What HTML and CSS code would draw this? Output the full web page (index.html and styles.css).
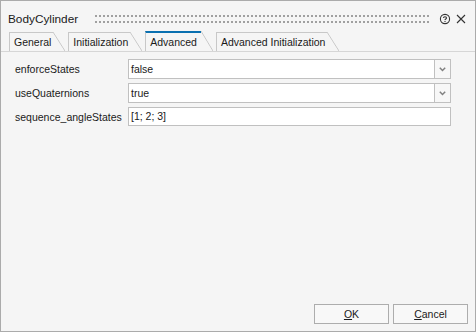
FILE: index.html
```html
<!DOCTYPE html>
<html lang="en">
<head>
    <meta charset="UTF-8">
    <title>BodyCylinder</title>
    <link rel="stylesheet" href="styles.css">
</head>
<body>
    <div class="window">
        <div class="titlebar">
            <span class="title">BodyCylinder</span>
            <div class="grip"></div>
            <svg class="help" width="12" height="12" viewBox="0 0 12 12">
                <circle cx="6" cy="6" r="4.6" fill="none" stroke="#333" stroke-width="1.1"/>
                <path d="M4.5 4.9 C4.5 3.3 7.5 3.3 7.5 4.9 C7.5 6 6 6 6 7.1" fill="none" stroke="#333" stroke-width="1.1"/>
                <rect x="5.45" y="7.9" width="1.1" height="1.1" fill="#333"/>
            </svg>
            <svg class="close" width="10" height="10" viewBox="0 0 10 10">
                <path d="M1 1 L9 9 M9 1 L1 9" stroke="#333" stroke-width="1.1"/>
            </svg>
        </div>

        <div class="tabs">
            <div class="tab">General</div>
            <div class="tab">Initialization</div>
            <div class="tab active">Advanced</div>
            <div class="tab">Advanced Initialization</div>
        </div>

        <div class="panel">
            <div class="label">enforceStates</div>
            <div class="combo">
                <div class="value">false</div>
                <div class="drop">
                    <svg width="7" height="5" viewBox="0 0 7 5"><path d="M0.8 0.8 L3.5 3.5 L6.2 0.8" fill="none" stroke="#808080" stroke-width="1.5"/></svg>
                </div>
            </div>

            <div class="label">useQuaternions</div>
            <div class="combo">
                <div class="value">true</div>
                <div class="drop">
                    <svg width="7" height="5" viewBox="0 0 7 5"><path d="M0.8 0.8 L3.5 3.5 L6.2 0.8" fill="none" stroke="#808080" stroke-width="1.5"/></svg>
                </div>
            </div>

            <div class="label">sequence_angleStates</div>
            <div class="field">[1; 2; 3]</div>
        </div>

        <div class="footer">
            <button class="button"><u>O</u>K</button>
            <button class="button"><u>C</u>ancel</button>
        </div>
    </div>
</body>
</html>
```

FILE: styles.css
```css
body {
    margin: 0;
    padding: 0;
    font-family: 'Liberation Sans', Arial, sans-serif;
    color: #1a1a1a;
}

.window {
    width: 476px;
    height: 332px;
    box-sizing: border-box;
    border: 1px solid #ababab;
    background: #f5f5f5;
    display: flex;
    flex-direction: column;
}

.titlebar {
    display: flex;
    align-items: center;
    height: 30px;
    box-sizing: border-box;
    padding: 6px 9px 0 7px;
}

.title {
    font-size: 11.8px;
    color: #1a1a1a;
}

.grip {
    flex: 1;
    height: 12px;
    margin: 0 9px 0 16px;
    background: radial-gradient(circle, #a0a0a0 1px, transparent 1.4px) 0 0 / 4px 6px;
}

.help {
    margin-right: 5px;
}

.tabs {
    display: flex;
    align-items: flex-end;
    height: 21px;
    box-sizing: border-box;
    padding-left: 8px;
    border-bottom: 1px solid #d6d6d6;
}

.tab {
    position: relative;
    height: 19px;
    box-sizing: border-box;
    border-left: 1px solid #c8c8c8;
    border-top: 1px solid #c8c8c8;
    padding: 0 2px 0 4px;
    margin-right: 15px;
    font-size: 10.5px;
    line-height: 19px;
    white-space: nowrap;
}

.tab::after {
    content: "";
    position: absolute;
    top: -1px;
    left: 100%;
    width: 12px;
    height: calc(100% + 1px);
    background: linear-gradient(to top right, transparent calc(50% - 0.8px), #c8c8c8 50%, transparent calc(50% + 0.8px));
}

.tab.active {
    height: 20px;
    border-top: 2px solid #0a70b0;
    padding-right: 4px;
    line-height: 18px;
}

.tab.active::after {
    top: -2px;
    height: calc(100% + 2px);
}

.panel {
    display: grid;
    grid-template-columns: 113px 1fr;
    row-gap: 4px;
    padding: 7px 24px 0 14px;
    font-size: 10.5px;
}

.label {
    display: flex;
    align-items: center;
    height: 20px;
    white-space: nowrap;
}

.combo {
    display: flex;
    height: 20px;
}

.value {
    flex: 1;
    box-sizing: border-box;
    border: 1px solid #c0c0c0;
    background: white;
    padding-left: 2px;
    line-height: 18px;
}

.drop {
    width: 16px;
    box-sizing: border-box;
    border: 1px solid #c0c0c0;
    border-left: none;
    background: #f7f7f7;
    display: flex;
    align-items: center;
    justify-content: center;
}

.field {
    height: 19px;
    box-sizing: border-box;
    border: 1px solid #c0c0c0;
    background: white;
    padding-left: 2px;
    line-height: 17px;
}

.footer {
    margin-top: auto;
    display: flex;
    justify-content: flex-end;
    gap: 4px;
    padding: 0 7px 7px 0;
}

.button {
    width: 75px;
    height: 20px;
    padding: 0;
    border: 1px solid #adadad;
    background: #f8f8f8;
    font-family: 'Liberation Sans', Arial, sans-serif;
    font-size: 10.5px;
    color: #1a1a1a;
}
```
